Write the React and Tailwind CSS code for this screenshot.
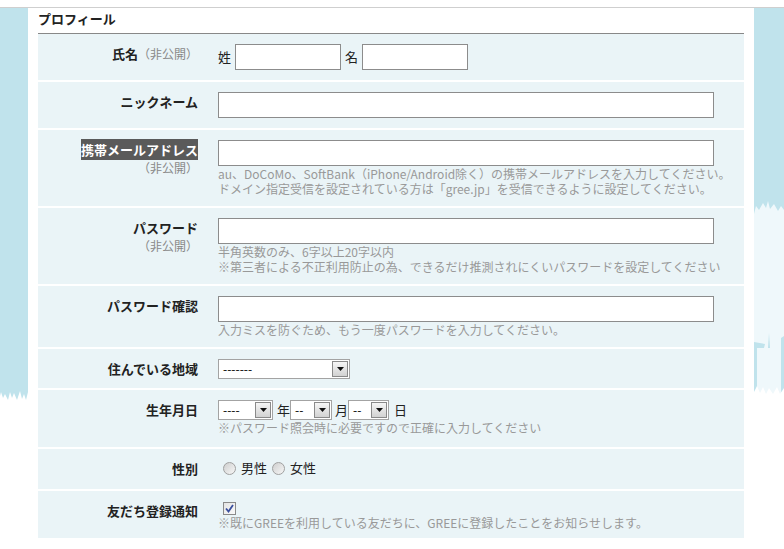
import React from 'react';

const font = { fontFamily: '"Noto Sans CJK JP", "Noto Sans", sans-serif' };

function Hint({ children }) {
    return <p className="whitespace-nowrap text-[12px] leading-[15px] text-[#999]">{children}</p>;
}

function TextBox({ className = 'w-[496px]' }) {
    return <div className={`h-[26px] border border-[#8c8c8c] bg-white ${className}`} />;
}

function Select({ className, text }) {
    return (
        <div className={`flex h-[20px] items-center border border-[#a3a3a3] bg-white ${className}`}>
            <span className="flex-1 pl-[4px] text-[12px] leading-none text-black">{text}</span>
            <span className="mr-[1px] flex h-[16px] w-[16px] items-center justify-center border border-[#8a8a8a] bg-gradient-to-b from-[#f6f6f6] to-[#d2d2d2]">
                <svg width="7" height="4" viewBox="0 0 7 4">
                    <path d="M0 0h7L3.5 4z" fill="#111" />
                </svg>
            </span>
        </div>
    );
}

function Radio() {
    return <span className="inline-block h-[13px] w-[13px] rounded-full border border-[#a0a0a0] bg-gradient-to-br from-[#cfcfcf] to-[#f7f7f7]" />;
}

function Row({ height, label, children, contentClass = 'pt-[10px]' }) {
    return (
        <div className={`flex bg-[#eaf4f7] ${height}`}>
            <div className="w-[160px] shrink-0 pt-[11px] text-right text-[13px] leading-[18px]">{label}</div>
            <div className={`flex-1 pl-[20px] ${contentClass}`}>{children}</div>
        </div>
    );
}

const Private = () => <span className="text-[12px] font-normal text-[#888]">（非公開）</span>;

function LeftArt() {
    return (
        <svg width="28" height="400" viewBox="0 0 28 400" className="block">
            <path
                d="M0 0H28V384L26 392L24 386L22 391L20 383L17 392L14 385L12 390L10 384L8 392L5 386L3 390L1 384L0 388Z"
                fill="#c0e3ec"
            />
        </svg>
    );
}

function RightArt() {
    return (
        <svg width="30" height="400" viewBox="0 0 30 400" className="block">
            <rect x="0" y="0" width="30" height="390" fill="#c0e3ec" />
            <path
                d="M0 206L2 198L5 202L9 195L12 200L14 193L16 201L20 196L24 203L27 198L30 202V388L0 388Z"
                fill="#eff8fb"
            />
            <path d="M0 334L11 336L10 340L3 340L3 388L0 388Z" fill="#c0e3ec" />
            <path d="M15 325L16 340L14 340Z" fill="#c0e3ec" />
            <path d="M27 330L30 328V388L27 388Z" fill="#c0e3ec" />
            <path d="M0 384L3 378L6 385L9 379L12 386L15 380L19 386L23 379L26 386L30 380V400H0Z" fill="#ffffff" />
        </svg>
    );
}

export default function App() {
    return (
        <div className="min-h-[549px] bg-white pt-[7px] text-[#222]" style={font}>
            <div className="flex border-t border-[#cfcfcf]">
                <div className="w-[28px] shrink-0">
                    <LeftArt />
                </div>

                <div className="w-[726px] shrink-0 bg-white px-[10px]">
                    {/* Heading */}
                    <h2 className="h-[26px] border-b border-[#888] text-[13px] font-bold leading-[22px]">プロフィール</h2>

                    <div className="flex flex-col gap-[2px]">
                        <Row height="h-[46px]" label={<><b>氏名</b><Private /></>}>
                            <div className="flex items-center text-[13px]">
                                <span>姓</span>
                                <TextBox className="ml-[4px] w-[106px]" />
                                <span className="ml-[4px]">名</span>
                                <TextBox className="ml-[4px] w-[106px]" />
                            </div>
                        </Row>

                        <Row height="h-[46px]" label={<b>ニックネーム</b>}>
                            <TextBox />
                        </Row>

                        <Row
                            height="h-[76px]"
                            label={
                                <>
                                    <b className="bg-[#5a5a5a] py-[1px] text-white">携帯メールアドレス</b>
                                    <br />
                                    <Private />
                                </>
                            }
                        >
                            <TextBox />
                            <Hint>au、DoCoMo、SoftBank（iPhone/Android除く）の携帯メールアドレスを入力してください。</Hint>
                            <Hint>ドメイン指定受信を設定されている方は「gree.jp」を受信できるように設定してください。</Hint>
                        </Row>

                        <Row
                            height="h-[76px]"
                            label={
                                <>
                                    <b>パスワード</b>
                                    <br />
                                    <Private />
                                </>
                            }
                        >
                            <TextBox />
                            <Hint>半角英数のみ、6字以上20字以内</Hint>
                            <Hint>※第三者による不正利用防止の為、できるだけ推測されにくいパスワードを設定してください</Hint>
                        </Row>

                        <Row height="h-[61px]" label={<b>パスワード確認</b>}>
                            <TextBox />
                            <Hint>入力ミスを防ぐため、もう一度パスワードを入力してください。</Hint>
                        </Row>

                        <Row height="h-[39px]" label={<b>住んでいる地域</b>}>
                            <Select className="w-[132px]" text="-------" />
                        </Row>

                        <Row height="h-[57px]" label={<b>生年月日</b>}>
                            <div className="flex items-center text-[13px]">
                                <Select className="w-[55px]" text="----" />
                                <span className="ml-[4px]">年</span>
                                <Select className="w-[42px]" text="--" />
                                <span className="ml-[3px]">月</span>
                                <Select className="w-[41px]" text="--" />
                                <span className="ml-[5px]">日</span>
                            </div>
                            <Hint>※パスワード照会時に必要ですので正確に入力してください</Hint>
                        </Row>

                        <Row height="h-[40px]" label={<b>性別</b>}>
                            <div className="flex h-[18px] items-center text-[13px]">
                                <span className="ml-[5px] flex"><Radio /></span>
                                <span className="ml-[5px]">男性</span>
                                <span className="ml-[5px] flex"><Radio /></span>
                                <span className="ml-[5px]">女性</span>
                            </div>
                        </Row>

                        <Row height="h-[47px]" label={<b>友だち登録通知</b>} contentClass="pt-[11px]">
                            <span className="ml-[5px] flex h-[13px] w-[13px] items-center justify-center border border-[#8a8a8a] bg-gradient-to-br from-[#e4e4e4] to-[#fafafa]">
                                <svg width="9" height="9" viewBox="0 0 9 9">
                                    <path d="M1 4.5L3.5 7.5L8 1" fill="none" stroke="#3a4f9e" strokeWidth="1.8" />
                                </svg>
                            </span>
                            <Hint>※既にGREEを利用している友だちに、GREEに登録したことをお知らせします。</Hint>
                        </Row>
                    </div>
                </div>

                <div className="flex-1">
                    <RightArt />
                </div>
            </div>
        </div>
    );
}
